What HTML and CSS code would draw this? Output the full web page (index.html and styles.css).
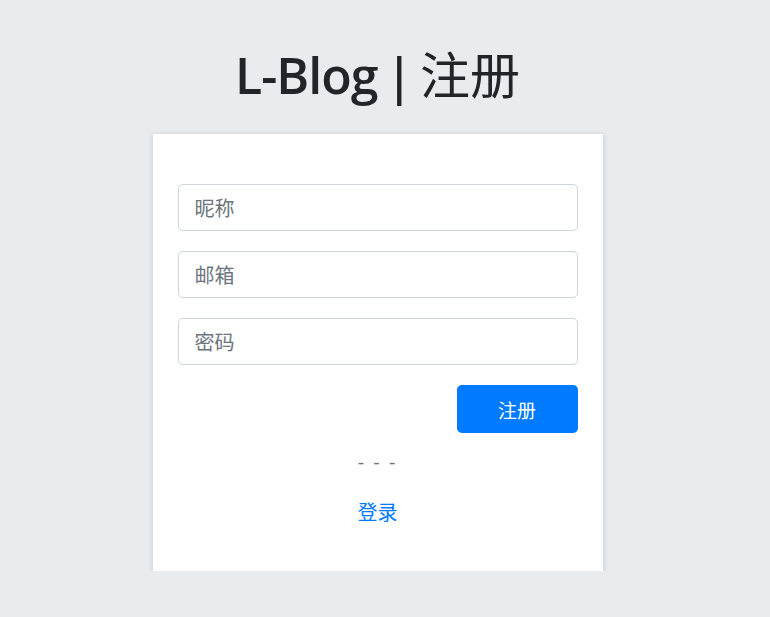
FILE: index.html
```html
<!DOCTYPE html>
<html lang="zh">
<head>
  <meta charset="UTF-8">
  <meta name="viewport" content="width=device-width, initial-scale=1.0">
  <title>L-Blog | 注册</title>
  <link rel="stylesheet" href="styles.css">
</head>
<body>
  <h1 class="title">L-Blog | <span class="title-cn">注册</span></h1>

  <div class="card">
    <form class="register-form">
      <input type="text" class="form-input" placeholder="昵称">
      <input type="email" class="form-input" placeholder="邮箱">
      <input type="password" class="form-input" placeholder="密码">
      <div class="actions">
        <button type="button" class="btn-primary">注册</button>
      </div>
    </form>
    <div class="divider">- - -</div>
    <div class="links">
      <a href="#">登录</a>
    </div>
  </div>
</body>
</html>
```

FILE: styles.css
```css
body {
  margin: 0;
  padding-right: 15px;
  background-color: #e9ecef;
  font-family: "Open Sans", "Noto Sans CJK SC", sans-serif;
  color: #212529;
}

.title {
  height: 67px;
  margin: 42px 0 25px;
  text-align: center;
  font-family: "Open Sans", "Noto Sans CJK SC", sans-serif;
  font-size: 50px;
  font-weight: 550;
  line-height: 67px;
  letter-spacing: -1px;
  word-spacing: -4px;
  color: #212529;
}

.title-cn {
  font-family: "Noto Sans CJK SC", sans-serif;
  font-weight: 400;
  letter-spacing: 0;
  line-height: 1;
}

.card {
  width: 450px;
  box-sizing: border-box;
  margin: 0 auto;
  padding: 50px 25px 46px;
  background: #fff;
  box-shadow: 0 1px 5px rgba(0, 0, 0, 0.18);
}

.register-form {
  display: flex;
  flex-direction: column;
  gap: 20px;
}

.form-input {
  height: 47px;
  box-sizing: border-box;
  padding: 0 16px;
  border: 1px solid #ced4da;
  border-radius: 4.8px;
  font-family: "Noto Sans CJK SC", sans-serif;
  font-size: 20px;
  color: #495057;
  outline: none;
}

.form-input::placeholder {
  color: #6c757d;
}

.actions {
  display: flex;
  justify-content: flex-end;
}

.btn-primary {
  height: 48px;
  width: 121px;
  border: none;
  border-radius: 4.8px;
  background-color: #007bff;
  color: #fff;
  font-family: "Noto Sans CJK SC", sans-serif;
  font-size: 19px;
  cursor: pointer;
}

.divider {
  margin-top: 17px;
  text-align: center;
  color: #6c757d;
  font-size: 20px;
  line-height: 24px;
  letter-spacing: 2px;
}

.links {
  margin-top: 26px;
  text-align: center;
  font-size: 20px;
  line-height: 24px;
}

.links a {
  color: #007bff;
  text-decoration: none;
  font-family: "Noto Sans CJK SC", sans-serif;
}
```
